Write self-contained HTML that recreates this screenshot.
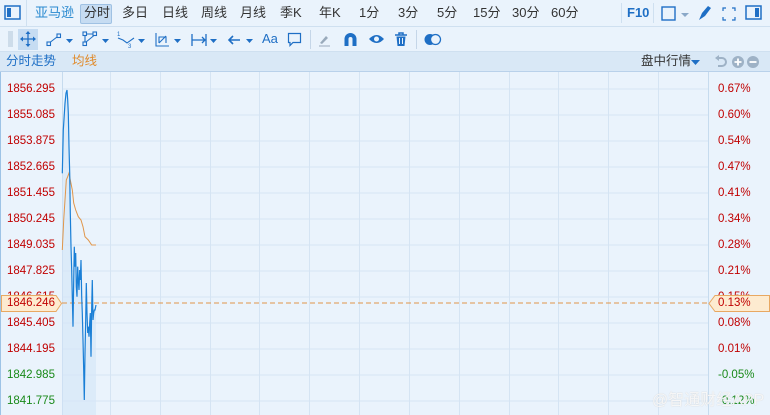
<!DOCTYPE html>
<html><head><meta charset="utf-8"><style>
*{margin:0;padding:0;box-sizing:border-box}
body{width:770px;height:415px;overflow:hidden;background:#eaf3fc;font-family:"Liberation Sans","Noto Sans CJK SC",sans-serif;font-size:12px;color:#333;position:relative}
.bar1{position:absolute;left:0;top:0;width:770px;height:27px;background:#eaf3fc;border-bottom:1px solid #cfe0f0}
.bar2{position:absolute;left:0;top:27px;width:770px;height:25px;background:#eaf3fc;border-bottom:1px solid #cfe0f0}
.bar3{position:absolute;left:0;top:52px;width:770px;height:20px;background:#d9e8f6;border-bottom:1px solid #b9d1ea}
.t{position:absolute;top:4px;font-size:13px;line-height:18px;color:#333;white-space:nowrap}
.ax{position:absolute;font-size:11.5px;color:#c00000;white-space:nowrap}
.g{color:#1a8a1a}
svg{position:absolute}
</style></head><body>
<div class="bar1">
<svg style="left:4px;top:5px" width="18" height="16"><rect x="1" y="1" width="15" height="13" fill="none" stroke="#1f6fc5" stroke-width="1.5"/><rect x="3" y="3" width="4" height="9" fill="#1f6fc5"/></svg>
<div style="position:absolute;left:26px;top:0;width:1px;height:27px;background:#cfe0f0"></div>
<span class="t" style="left:35px;color:#2a8ad0">亚马逊</span>
<div style="position:absolute;left:80px;top:4px;width:32px;height:20px;background:#c6dcf2;border:1px solid #9fc1e3;border-radius:2px"></div>
<span class="t" style="left:84px">分时</span>
<span class="t" style="left:122px">多日</span>
<span class="t" style="left:162px">日线</span>
<span class="t" style="left:201px">周线</span>
<span class="t" style="left:240px">月线</span>
<span class="t" style="left:280px">季K</span>
<span class="t" style="left:319px">年K</span>
<span class="t" style="left:359px">1分</span>
<span class="t" style="left:398px">3分</span>
<span class="t" style="left:437px">5分</span>
<span class="t" style="left:473px">15分</span>
<span class="t" style="left:512px">30分</span>
<span class="t" style="left:551px">60分</span>
<div style="position:absolute;left:621px;top:3px;width:1px;height:20px;background:#cfe0f0"></div>
<span class="t" style="left:627px;color:#1f6fc5;font-weight:bold">F10</span>
<div style="position:absolute;left:653px;top:3px;width:1px;height:20px;background:#cfe0f0"></div>
<svg style="left:661px;top:6px" width="30" height="16"><rect x="1" y="1" width="13" height="13" fill="none" stroke="#1f6fc5" stroke-width="1.4"/><path d="M20 7h8l-4 4z" fill="#8aa8c8"/></svg>
<svg style="left:697px;top:5px" width="16" height="16"><path d="M2 15l3-7 6-7 3 2-6 8z" fill="#1f6fc5"/></svg>
<svg style="left:722px;top:7px" width="14" height="14" stroke="#1f6fc5" fill="none" stroke-width="1.2"><path d="M1 4V1h3M10 1h3v3M13 10v3h-3M4 13H1v-3"/></svg>
<svg style="left:745px;top:5px" width="18" height="16"><rect x="1" y="1" width="15" height="13" fill="none" stroke="#1f6fc5" stroke-width="1.5"/><rect x="10" y="3" width="4" height="9" fill="#1f6fc5"/></svg>
</div>
<div class="bar2">
<svg style="left:8px;top:4px" width="6" height="16"><path d="M0 1h5M0 3h5M0 5h5M0 7h5M0 9h5M0 11h5M0 13h5M0 15h5" stroke="#b0c4d8"/></svg>
<div style="position:absolute;left:18px;top:2px;width:20px;height:21px;background:#c6dcf2"></div>
<svg style="left:19px;top:3px" width="18" height="18" stroke="#1f6fc5" fill="#1f6fc5" stroke-width="1.3"><path d="M9 2v14M2 9h14" fill="none"/><path d="M9 1l-2.5 3h5zM9 17l-2.5-3h5zM1 9l3-2.5v5zM17 9l-3-2.5v5z" stroke="none"/></svg>
<svg style="left:46px;top:5px" width="30" height="16" stroke="#1f6fc5" fill="none" stroke-width="1.1"><rect x="1" y="10" width="3.5" height="3.5"/><rect x="11" y="2" width="3.5" height="3.5"/><path d="M4.5 10l6.5-5"/><path d="M20 7h7l-3.5 4z" fill="#1f6fc5" stroke="none"/></svg>
<svg style="left:82px;top:4px" width="30" height="16" stroke="#1f6fc5" fill="none" stroke-width="1.1"><rect x="1" y="1" width="3.5" height="3.5"/><rect x="11" y="1" width="3.5" height="3.5"/><rect x="1" y="11" width="3.5" height="3.5"/><path d="M4.5 3h6.5M3 4.5v6.5M4 11l8-6.5"/><path d="M20 8h7l-3.5 4z" fill="#1f6fc5" stroke="none"/></svg>
<svg style="left:116px;top:4px" width="32" height="17" stroke="#1f6fc5" fill="none" stroke-width="1.1"><path d="M2 7l5 2 4 3 7-5"/><text x="1" y="5" font-size="6" fill="#1f6fc5" stroke="none">1</text><text x="12" y="17" font-size="6" fill="#1f6fc5" stroke="none">3</text><path d="M22 8h7l-3.5 4z" fill="#1f6fc5" stroke="none"/></svg>
<svg style="left:154px;top:4px" width="30" height="17" stroke="#1f6fc5" fill="none" stroke-width="1.1"><path d="M2 2v13h13M5 12V6h7v6M5 12l7-7"/><path d="M20 8h7l-3.5 4z" fill="#1f6fc5" stroke="none"/></svg>
<svg style="left:190px;top:5px" width="30" height="16" stroke="#1f6fc5" fill="none" stroke-width="1.3"><path d="M2 2v12M16 2v12M2 8h13M12 5l3 3-3 3"/><path d="M20 7h7l-3.5 4z" fill="#1f6fc5" stroke="none"/></svg>
<svg style="left:226px;top:5px" width="30" height="16" stroke="#1f6fc5" fill="none" stroke-width="1.6"><path d="M14 8H3M7 4L3 8l4 4"/><path d="M20 7h7l-3.5 4z" fill="#1f6fc5" stroke="none"/></svg>
<span style="position:absolute;left:262px;top:4px;font-size:13px;color:#1f6fc5">Aa</span>
<svg style="left:287px;top:5px" width="16" height="16" stroke="#1f6fc5" fill="none" stroke-width="1.2"><path d="M1.5 1.5h12v9H6l-3 3v-3H1.5z"/></svg>
<div style="position:absolute;left:310px;top:3px;width:1px;height:19px;background:#c5d6e8"></div>
<svg style="left:318px;top:6px" width="14" height="14"><path d="M2 10l6-7 2 2-6 6z" fill="#9ab"/><path d="M1 13h11" stroke="#9ab"/></svg>
<svg style="left:343px;top:5px" width="15" height="15"><path d="M1.5 14V7a6 6 0 0 1 12 0v7h-4V7a2 2 0 0 0-4 0v7z" fill="#1f6fc5"/></svg>
<svg style="left:368px;top:6px" width="17" height="12"><path d="M1 6q7.5-8 15 0-7.5 8-15 0z" fill="#1f6fc5"/><circle cx="8.5" cy="6" r="2.5" fill="#eaf3fc"/></svg>
<svg style="left:394px;top:5px" width="14" height="15"><path d="M1 3h12M5 3V1h4v2" stroke="#1f6fc5" stroke-width="1.5" fill="none"/><path d="M2.5 4.5h9l-1 9.5h-7z" fill="#1f6fc5"/><path d="M5.5 6v6M8.5 6v6" stroke="#eaf3fc"/></svg>
<div style="position:absolute;left:416px;top:3px;width:1px;height:19px;background:#c5d6e8"></div>
<svg style="left:424px;top:6px" width="18" height="13"><circle cx="6" cy="6.5" r="5.5" fill="#1f6fc5"/><circle cx="11.5" cy="6.5" r="5" fill="#eaf3fc" stroke="#1f6fc5" stroke-width="1.3"/></svg>
</div>
<div class="bar3">
<span style="position:absolute;left:6px;top:1px;font-size:12.5px;line-height:17px;color:#1f6fc5">分时走势</span>
<span style="position:absolute;left:72px;top:1px;font-size:12.5px;line-height:17px;color:#e08a2a">均线</span>
<span style="position:absolute;left:641px;top:1px;font-size:12.5px;line-height:17px;color:#333">盘中行情</span>
<svg style="left:691px;top:8px" width="10" height="6"><path d="M0 0h9l-4.5 5z" fill="#1f6fc5"/></svg>
<svg style="left:714px;top:3px" width="56" height="14"><path d="M3 3h5a4 4 0 0 1 0 8H4" stroke="#9eb2c6" stroke-width="2" fill="none"/><path d="M1 3l4-3v6z" fill="#9eb2c6"/><circle cx="24" cy="7" r="6" fill="#9eb2c6"/><path d="M20.5 7h7M24 3.5v7" stroke="#fff" stroke-width="1.8"/><circle cx="39" cy="7" r="6" fill="#9eb2c6"/><path d="M35.5 7h7" stroke="#fff" stroke-width="1.8"/></svg>
</div>
<svg style="left:0;top:72px" width="770" height="343">
<g stroke="#d5e4f3" stroke-width="1">
<path d="M62 17H708M62 43H708M62 69H708M62 95H708M62 121H708M62 147H708M62 173H708M62 199H708M62 225H708M62 251H708M62 277H708M62 303H708M62 329H708"/>
<path d="M110.5 0v343M160.5 0v343M210.5 0v343M259.5 0v343M309.5 0v343M359.5 0v343M409.5 0v343M459.5 0v343M509.5 0v343M558.5 0v343M608.5 0v343M658.5 0v343"/>
</g>
<path d="M62.5 0v343M708.5 0v343" stroke="#c6dbee"/>
<path d="M0.5 0v343" stroke="#9dc3e6"/>
<g transform="translate(0,-72)">
<path d="M62.3 173.3L63.3 130L65 103.3L66 93.3L67 90L67.7 100L68.3 113L69 146.7L69.7 173L70.3 213L71 246.7L71.7 270L72.3 296.7L73 326.7L73.7 280L74.3 246.7L75 266.7L75.7 253L76.3 286.7L77 296.7L77.7 266.7L78.3 280L79 290L79.7 270L80.3 280L81 260L81.7 296.7L82.3 313L83 340L83.7 370L84.3 400L85 353L85.7 320L86.3 283L87 313L87.7 333L88.3 326.7L89 336.7L89.7 323L90.3 313L91 356.7L91.7 306.7L92.3 280L93 320L93.7 313L94.3 310L95 310L96 305L96 415L62.3 415Z" fill="#d6e7f8" opacity="0.7"/>
<path d="M62 303H708" stroke="#e0964a" stroke-dasharray="5,3" stroke-width="1"/>
<path d="M62.3 250L63.7 220L65 200L66.3 180L67.7 176.7L69 173L70.3 180L72.3 190L73.7 203L75.7 210L78.3 216.7L81 220L83 226.7L85 236.7L88.3 240L91.7 245L96 245" stroke="#e0964a" fill="none" stroke-width="1"/>
<path d="M62.3 173.3L63.3 130L65 103.3L66 93.3L67 90L67.7 100L68.3 113L69 146.7L69.7 173L70.3 213L71 246.7L71.7 270L72.3 296.7L73 326.7L73.7 280L74.3 246.7L75 266.7L75.7 253L76.3 286.7L77 296.7L77.7 266.7L78.3 280L79 290L79.7 270L80.3 280L81 260L81.7 296.7L82.3 313L83 340L83.7 370L84.3 400L85 353L85.7 320L86.3 283L87 313L87.7 333L88.3 326.7L89 336.7L89.7 323L90.3 313L91 356.7L91.7 306.7L92.3 280L93 320L93.7 313L94.3 310L95 310L96 305" stroke="#1a7fd6" fill="none" stroke-width="1.2"/>
</g>
</svg>
<div class="ax" style="left:7px;top:83px">1856.295</div>
<div class="ax" style="left:7px;top:109px">1855.085</div>
<div class="ax" style="left:7px;top:135px">1853.875</div>
<div class="ax" style="left:7px;top:161px">1852.665</div>
<div class="ax" style="left:7px;top:187px">1851.455</div>
<div class="ax" style="left:7px;top:213px">1850.245</div>
<div class="ax" style="left:7px;top:239px">1849.035</div>
<div class="ax" style="left:7px;top:265px">1847.825</div>
<div class="ax" style="left:7px;top:291px">1846.615</div>
<div class="ax" style="left:7px;top:317px">1845.405</div>
<div class="ax" style="left:7px;top:343px">1844.195</div>
<div class="ax g" style="left:7px;top:369px">1842.985</div>
<div class="ax g" style="left:7px;top:395px">1841.775</div>
<div class="ax" style="left:718px;top:83px">0.67%</div>
<div class="ax" style="left:718px;top:109px">0.60%</div>
<div class="ax" style="left:718px;top:135px">0.54%</div>
<div class="ax" style="left:718px;top:161px">0.47%</div>
<div class="ax" style="left:718px;top:187px">0.41%</div>
<div class="ax" style="left:718px;top:213px">0.34%</div>
<div class="ax" style="left:718px;top:239px">0.28%</div>
<div class="ax" style="left:718px;top:265px">0.21%</div>
<div class="ax" style="left:718px;top:291px">0.15%</div>
<div class="ax" style="left:718px;top:317px">0.08%</div>
<div class="ax" style="left:718px;top:343px">0.01%</div>
<div class="ax g" style="left:718px;top:369px">-0.05%</div>
<div class="ax g" style="left:718px;top:395px">-0.12%</div>
<svg style="left:1px;top:295px" width="62" height="17"><path d="M0.5 0.5H55L60.5 8.5L55 16.5H0.5Z" fill="#fdebd0" stroke="#e8a862"/></svg>
<div class="ax" style="left:7px;top:297px">1846.246</div>
<svg style="left:708px;top:295px" width="62" height="17"><path d="M61.5 0.5H7L1 8.5L7 16.5H61.5Z" fill="#fdebd0" stroke="#e8a862"/></svg>
<div class="ax" style="left:718px;top:297px">0.13%</div>
<div style="position:absolute;left:652px;top:386px;font-size:16px;color:rgba(255,255,255,0.8);text-shadow:0 0 1px #c8c8c8">@智通财经APP</div>
</body></html>
